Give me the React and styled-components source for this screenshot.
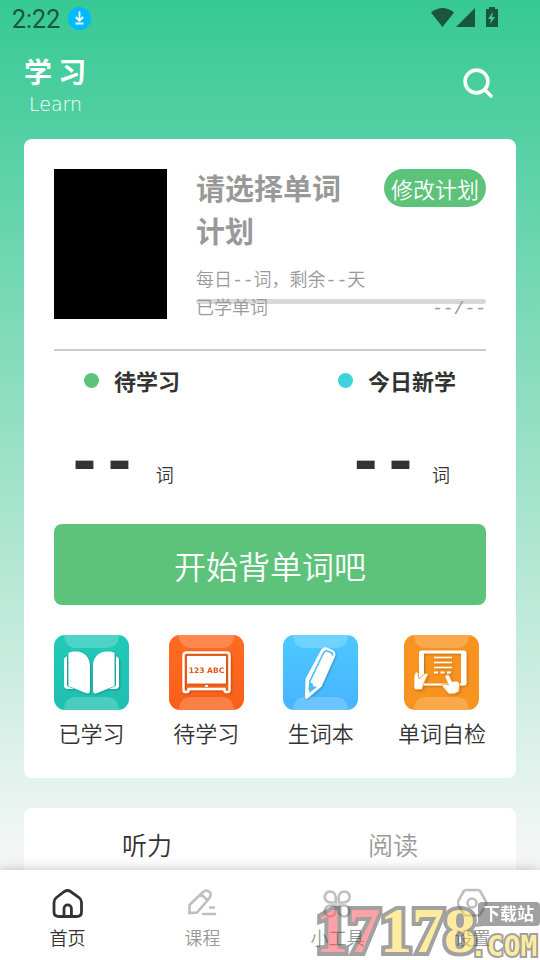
import styled, { createGlobalStyle } from "styled-components";

const GlobalStyle = createGlobalStyle`
  * {
    box-sizing: border-box;
  }

  body {
    margin: 0;
    font-family: "Noto Sans CJK SC", sans-serif;
    font-weight: 350;
    color: #333;
  }

  button {
    border: 0;
    padding: 0;
    background: none;
    color: inherit;
    font-family: inherit;
    font-weight: inherit;
    cursor: pointer;
  }
`;

const Page = styled.div`
  height: 100vh;
  display: flex;
  flex-direction: column;
  position: relative;
  overflow: hidden;
  background: #f7f7f7;
`;

const Main = styled.main`
  flex: 1;
  min-height: 0;
  overflow: hidden;
  padding: 0 24px;
  background: linear-gradient(#36c994, #f7f7f7);
`;

const StatusBar = styled.div`
  height: 36px;
  margin: 0 -12px;
  display: flex;
  align-items: center;
  justify-content: space-between;
  color: #1a5541;
`;

const StatusGroup = styled.div`
  display: flex;
  align-items: center;
  gap: ${(props) => props.$gap}px;
  padding-right: ${(props) => props.$end || 0}px;
`;

const Clock = styled.span`
  padding-top: 4px;
  font: 400 25px/32px Roboto, sans-serif;
`;

const Header = styled.header`
  height: 103px;
  padding-right: 22px;
  display: flex;
  align-items: flex-start;
  justify-content: space-between;
`;

const Brand = styled.div`
  padding-top: 14px;
  color: white;
`;

const BrandTitle = styled.h1`
  margin: 0;
  font: 700 28px/42px "Noto Sans CJK SC", sans-serif;
`;

const BrandSub = styled.div`
  padding-left: 5px;
  font: 200 19px/24px "DejaVu Sans", sans-serif;
`;

const SearchButton = styled.button`
  height: 34px;
  margin-top: 31px;
`;

const Card = styled.section`
  background: white;
  border-radius: 8px;
  padding: ${(props) => props.$pad || "0"};
  margin-bottom: 30px;
`;

const Plan = styled.div`
  display: flex;
  gap: 29px;
  padding-bottom: 30px;
  border-bottom: 2px solid #ccc;
`;

const Cover = styled.div`
  flex: none;
  width: 113px;
  height: 150px;
  background: black;
`;

const PlanInfo = styled.div`
  flex: 1;
  color: #999;
  font-size: 18px;
  line-height: 28px;
`;

const Mono = styled.span`
  font-family: "Liberation Mono", monospace;
  line-height: 18px;
`;

const PlanTop = styled.div`
  display: flex;
  align-items: flex-start;
  justify-content: space-between;
  gap: 30px;
`;

const PlanTitle = styled.h2`
  margin: -3px 0 0;
  padding-bottom: 12px;
  font-size: 29px;
  font-weight: 700;
  line-height: 43px;
`;

const EditButton = styled.button`
  flex: none;
  height: 38px;
  padding: 0 7px;
  border-radius: 19px;
  background: #5dc27a;
  color: white;
  font-size: 22px;
  line-height: 38px;
`;

const Progress = styled.div`
  height: 5px;
  margin-top: 7px;
  border-radius: 3px;
  background: #d8d8d8;
`;

const ProgressText = styled.div`
  display: flex;
  align-items: baseline;
  justify-content: space-between;
  margin-top: -11px;
  line-height: 26px;
`;

const Stats = styled.div`
  display: flex;
  justify-content: space-between;
  padding: ${(props) => props.$pad};
`;

const Legend = styled.div`
  display: flex;
  align-items: center;
  gap: 15px;
  font-size: 22px;
  font-weight: 700;
  line-height: 32px;

  &::before {
    content: "";
    width: 15px;
    height: 15px;
    border-radius: 50%;
    background: ${(props) => props.$color};
  }
`;

const Count = styled.div`
  display: flex;
  align-items: baseline;
  gap: ${(props) => props.$gap}px;
  font-size: 18px;
  line-height: 18px;

  strong {
    font-family: "DejaVu Sans Mono", monospace;
    font-size: 58px;
    line-height: 80px;
  }
`;

const StartButton = styled.button`
  display: block;
  width: 100%;
  height: 81px;
  border-radius: 8px;
  background: #5dc27a;
  color: white;
  font-size: 32px;
`;

const Shortcuts = styled.div`
  display: flex;
  justify-content: space-between;
  padding-top: 30px;
`;

const Shortcut = styled.button`
  display: flex;
  flex-direction: column;
  align-items: center;
  gap: 6px;
  font-size: 22px;
  line-height: 32px;
`;

const Tabs = styled.div`
  display: flex;
`;

const Tab = styled.button`
  flex: 1;
  height: 72px;
  font-size: 25px;
  color: ${(props) => (props.$active ? "#333" : "#999")};
`;

const NavBar = styled.nav`
  flex: none;
  display: flex;
  height: 90px;
  background: white;
  box-shadow: 0 0 12px rgba(0, 0, 0, 0.25);
  z-index: 1;
`;

const NavItem = styled.button`
  flex: 1;
  display: flex;
  flex-direction: column;
  align-items: center;
  padding-top: 18px;
  gap: 3px;
  font-size: 18px;
  line-height: 28px;
  color: ${(props) => (props.$active ? "#333" : "#999")};

  svg {
    color: ${(props) => (props.$active ? "#333" : "#bfbfbf")};
  }
`;

const Stamp = styled.svg`
  position: absolute;
  right: 0;
  bottom: 0;
  z-index: 2;
  opacity: 0.5;
  overflow: visible;
  pointer-events: none;

  text {
    paint-order: stroke;
    stroke: #464646;
    font-weight: 700;
  }
`;

const DownloadIcon = () => (
  <svg width="23" height="23" viewBox="0 0 23 23">
    <circle cx="11.5" cy="11.5" r="11.5" fill="#00baff" />
    <path d="M11.5 4.5v9M7.8 10l3.7 3.8 3.7-3.8M7.5 16.5h8" fill="none" stroke="white" strokeWidth="1.8" />
  </svg>
);

const SignalIcons = () => (
  <svg width="68" height="22" viewBox="0 0 68 22" fill="currentColor">
    <path d="M0 5.5C7-.5 16-.5 23 5.5L11.5 20z" />
    <path d="M44 1v19H25z" />
    <path
      fillRule="evenodd"
      d="M58 0h6v2h3v18H55V2h3zM62 5l-5 7h3l-1 5 5-7h-3z"
    />
  </svg>
);

const SearchIcon = () => (
  <svg width="32" height="32" viewBox="0 0 32 32" fill="none" stroke="white" strokeWidth="3.6" strokeLinecap="round">
    <circle cx="14.5" cy="14.5" r="11.4" />
    <path d="M23 23l6 6" />
  </svg>
);

const Tile = ({ id, from, to, children }) => (
  <svg width="75" height="75" viewBox="0 0 75 75">
    <defs>
      <linearGradient id={id} x2="0" y2="1">
        <stop stopColor={from} />
        <stop offset="1" stopColor={to} />
      </linearGradient>
      <filter id={`${id}-shadow`} x="-20%" y="-20%" width="140%" height="140%">
        <feDropShadow dx="1" dy="1" stdDeviation="0.8" floodOpacity="0.25" />
      </filter>
    </defs>
    <rect width="75" height="75" rx="11" fill={`url(#${id})`} />
    <path
      d="M10 0h55c0 8-5 13-12 13H22C15 13 10 8 10 0zM10 75h55c0-8-5-13-12-13H22c-7 0-12 5-12 13z"
      fill="white"
      opacity="0.2"
    />
    <g filter={`url(#${id}-shadow)`}>{children}</g>
  </svg>
);

const BookTile = () => (
  <Tile id="book" from="#22c9b9" to="#1fbfb1">
    <path
      d="M14.5 18C16 16.5 19 16.5 22 16.5 31 16.5 36 23 36 31v24c0 3-1.5 4-4 3l-17.5-7zM60.5 18C59 16.5 56 16.5 53 16.5 44 16.5 39 23 39 31v24c0 3 1.5 4 4 3l17.5-7z"
      fill="white"
    />
    <path
      d="M13 21.5c-2 .5-3 1.5-3 3.5v26c0 2 2 3 4 3h6l-6-2.5c-1-.5-1-1-1-2zM62 21.5c2 .5 3 1.5 3 3.5v26c0 2-2 3-4 3h-6l6-2.5c1-.5 1-1 1-2z"
      fill="white"
    />
  </Tile>
);

const BoardTile = () => (
  <Tile id="board" from="#ff6c22" to="#f95f19">
    <rect x="18" y="21" width="39" height="27.5" fill="white" />
    <path
      d="M17.5 17.5h40q3 0 3 3V55q0 2-2 2h-1q-2 0-2-2v-1h-36v1q0 2-2 2h-1q-2 0-2-2V20.5q0-3 3-3z"
      fill="none"
      stroke="white"
      strokeWidth="2.4"
    />
    <rect x="36" y="50" width="3" height="1.8" fill="white" />
    <text x="37.5" y="37.5" textAnchor="middle" fontFamily="DejaVu Sans" fontWeight="700" fontSize="7.5" fill="#e2581b">
      123 ABC
    </text>
  </Tile>
);

const PencilTile = () => (
  <Tile id="pencil" from="#4bc9ff" to="#48b4fe">
    <path
      d="M38 15q2.5-4 7-2l4 1.8q4.5 2.2 3 6.5L38.5 51.5 25 63q-3 1.5-3-1.5L22.5 44z"
      fill="white"
    />
    <path
      d="M49.5 20.5q.5-2-1.500-3l-3-1.300q-3-1.200-4.500 1.800L27 46l-.8 9"
      fill="none"
      stroke="#4bbdff"
      strokeWidth="1.6"
    />
    <path d="M27 48l2.5 0 .5 3 4 1-8 6z" fill="#4bbdff" />
  </Tile>
);

const TabletTile = () => (
  <Tile id="tablet" from="#f99320" to="#f99320">
    <path
      fillRule="evenodd"
      d="M18 15.5h42q2.5 0 2.5 2.5v30q0 2.5-2.5 2.5H18q-3 0-3-2.5V18q0-2.5 3-2.5zM20 18.5v30h37V18.5z"
      fill="white"
    />
    <path d="M30 22.5h18M30 27.5h18M30 32.5h18" stroke="white" strokeWidth="1.5" />
    <path d="M30 37.5h18" stroke="white" strokeWidth="2" strokeDasharray="4 2.5" />
    <path
      d="M10 53V41l1.500-4q2-1 2.500 1l1 6 5.500-5q3-1.500 3.500.5L19.500 49l-1.500 5.500h-7z"
      fill="white"
      stroke="#f99320"
      strokeWidth="0.8"
    />
    <path
      d="M42 40q2.500-1 3.500 1l2.500 5.500 4-.5q3 0 3.500 3l-.5 7.500q-4 3-10 2.500l-7-8q0-3 3-2l3.500 1-3.500-8q0-1.500 1-2z"
      fill="white"
      stroke="#f99320"
      strokeWidth="0.8"
    />
  </Tile>
);

const HomeIcon = () => (
  <svg width="32" height="32" viewBox="0 0 32 32" fill="none" stroke="currentColor" strokeWidth="2.8">
    <path d="M12.5 3.500q3-2 6 0l8.500 6q2.500 2 2.500 5v9.500q0 4.500-5 4.500h-17.500q-5 0-5-4.500V14.500q0-3 2.500-5z" />
    <path d="M12 28.500v-8a3.700 3.700 0 0 1 7.400 0v8" />
  </svg>
);

const CourseIcon = () => (
  <svg width="32" height="32" viewBox="0 0 32 32" fill="none" stroke="currentColor" strokeWidth="2.6" strokeLinecap="round">
    <path d="M2.5 17L16 4q3-2.500 6-.5t.5 6.500L10 24.500l-7.500.5zM14 6.500l6.500 5.500M23 19.500h4M16 26h12" />
  </svg>
);

const ToolsIcon = () => (
  <svg width="32" height="32" viewBox="0 0 32 32" fill="none" stroke="currentColor" strokeWidth="2.6">
    <path d="M13.700 14.500H8.500a5.500 5.500 0 1 1 5.200-5.500zM16.700 14.500h5.200a5.500 5.500 0 1 0-5.200-5.500zM13.700 17.500H8.500a5.500 5.500 0 1 0 5.200 5.500zM16.700 17.500h5.200a5.500 5.500 0 1 1-5.200 5.500z" />
  </svg>
);

const SettingsIcon = () => (
  <svg width="32" height="32" viewBox="0 0 32 32" fill="none" stroke="currentColor" strokeWidth="2.6">
    <path d="M9 2h12q1.500 0 2.500 1.500L29 13.500q.5 1.500 0 3L23.500 26q-1 1.500-2.500 1.500H9q-1.500 0-2.500-1.500L1 16.500q-.5-1.500 0-3L6.500 3.500Q7.500 2 9 2z" />
    <circle cx="15" cy="15" r="4.5" />
  </svg>
);

const SiteStamp = () => (
  <Stamp width="224" height="62" viewBox="0 0 224 62">
    <text y="54" fontFamily="Liberation Serif" fontSize="64" strokeWidth="8">
      <tspan x="0" fill="#ff4852">
        17
      </tspan>
      <tspan fill="#fed940">178</tspan>
    </text>
    <path d="M166 4h54q4 0 4 4v16q0 4-4 4h-52l-10 1 4-5V8q0-4 4-4z" fill="#464646" />
    <text x="167" y="22" fontFamily="Noto Sans CJK SC" fontSize="17" fill="white" strokeWidth="0">
      下载站
    </text>
    <text x="154" y="58" fontFamily="DejaVu Sans Mono" fontSize="28" fill="#fed940" strokeWidth="4">
      .COM
    </text>
  </Stamp>
);

const shortcuts = [
  { label: "已学习", Icon: BookTile },
  { label: "待学习", Icon: BoardTile },
  { label: "生词本", Icon: PencilTile },
  { label: "单词自检", Icon: TabletTile },
];

const navItems = [
  { label: "首页", Icon: HomeIcon, active: true },
  { label: "课程", Icon: CourseIcon },
  { label: "小工具", Icon: ToolsIcon },
  { label: "设置", Icon: SettingsIcon },
];

const App = () => {
  return (
    <Page>
      <GlobalStyle />
      <Main>
        <StatusBar>
          <StatusGroup $gap={8}>
            <Clock>2:22</Clock>
            <DownloadIcon />
          </StatusGroup>
          <StatusGroup $end={29}>
            <SignalIcons />
          </StatusGroup>
        </StatusBar>
        <Header>
          <Brand>
            <BrandTitle>学 习</BrandTitle>
            <BrandSub>Learn</BrandSub>
          </Brand>
          <SearchButton aria-label="搜索">
            <SearchIcon />
          </SearchButton>
        </Header>
        <Card $pad="30px">
          <Plan>
            <Cover />
            <PlanInfo>
              <PlanTop>
                <PlanTitle>请选择单词计划</PlanTitle>
                <EditButton>修改计划</EditButton>
              </PlanTop>
              <div>
                每日<Mono>--</Mono>词，剩余<Mono>--</Mono>天
              </div>
              <Progress />
              <ProgressText>
                <span>已学单词</span>
                <Mono>--/--</Mono>
              </ProgressText>
            </PlanInfo>
          </Plan>
          <Stats $pad="13px 30px 0">
            <Legend $color="#5dc27a">待学习</Legend>
            <Legend $color="#3dd2dc">今日新学</Legend>
          </Stats>
          <Stats $pad="26px 36px 22px 13px">
            <Count $gap={19}>
              <strong>--</strong>词
            </Count>
            <Count $gap={14}>
              <strong>--</strong>词
            </Count>
          </Stats>
          <StartButton>开始背单词吧</StartButton>
          <Shortcuts>
            {shortcuts.map(({ label, Icon }) => (
              <Shortcut key={label}>
                <Icon />
                {label}
              </Shortcut>
            ))}
          </Shortcuts>
        </Card>
        <Card>
          <Tabs>
            <Tab $active>听力</Tab>
            <Tab>阅读</Tab>
          </Tabs>
        </Card>
      </Main>
      <NavBar>
        {navItems.map(({ label, Icon, active }) => (
          <NavItem key={label} $active={active}>
            <Icon />
            {label}
          </NavItem>
        ))}
      </NavBar>
      <SiteStamp />
    </Page>
  );
};

export default App;
